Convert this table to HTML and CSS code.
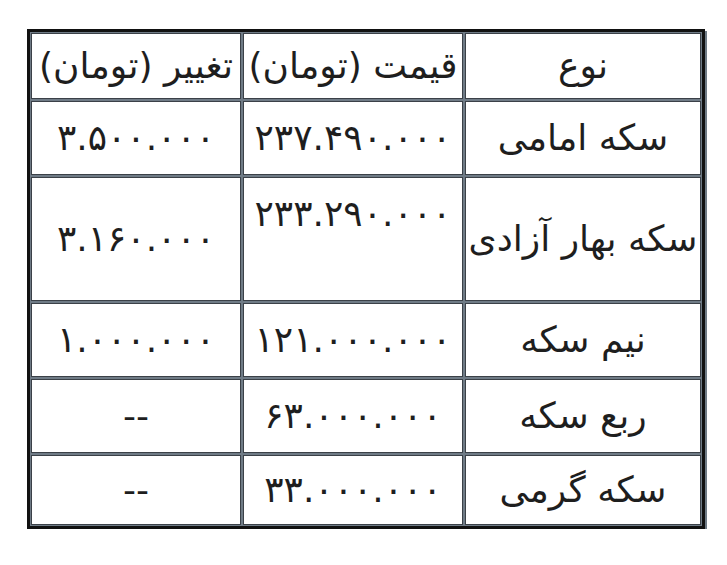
FILE: index.html
```html
<!DOCTYPE html>
<html lang="fa" dir="rtl">
<head>
<meta charset="utf-8">
<link rel="stylesheet" href="styles.css">
</head>
<body>
<div class="page">
<table class="prices">
  <tr class="r-head">
    <td class="c-name">نوع</td>
    <td class="c-price">قیمت (تومان)</td>
    <td class="c-change">تغییر (تومان)</td>
  </tr>
  <tr class="r1">
    <td class="c-name">سکه امامی</td>
    <td class="c-price num">۲۳۷.۴۹۰.۰۰۰</td>
    <td class="c-change num">۳.۵۰۰.۰۰۰</td>
  </tr>
  <tr class="r2">
    <td class="c-name">سکه بهار آزادی</td>
    <td class="c-price num">۲۳۳.۲۹۰.۰۰۰<br>&nbsp;</td>
    <td class="c-change num">۳.۱۶۰.۰۰۰</td>
  </tr>
  <tr class="r3">
    <td class="c-name">نیم سکه</td>
    <td class="c-price num">۱۲۱.۰۰۰.۰۰۰</td>
    <td class="c-change num">۱.۰۰۰.۰۰۰</td>
  </tr>
  <tr class="r4">
    <td class="c-name">ربع سکه</td>
    <td class="c-price num">۶۳.۰۰۰.۰۰۰</td>
    <td class="c-change">--</td>
  </tr>
  <tr class="r5">
    <td class="c-name">سکه گرمی</td>
    <td class="c-price num">۳۳.۰۰۰.۰۰۰</td>
    <td class="c-change">--</td>
  </tr>
</table>
</div>
</body>
</html>
```

FILE: styles.css
```css
html, body {
  margin: 0;
  padding: 0;
  background: #ffffff;
}

.page {
  padding: 29px 22px 0 22px;
  font-family: "DejaVu Sans", "Noto Sans", sans-serif;
  color: #1e1e1e;
}

.prices {
  width: 678px;
  border-collapse: separate;
  border-spacing: 0;
  border: 3px solid #111;
  box-shadow: 2px 2px 0 #6f7b86;
  font-size: 36px;
  line-height: 50px;
}

.prices td {
  border: 1px solid #6f7b86;
  box-shadow: inset 0 0 0 1px #3b4148;
  text-align: center;
  vertical-align: middle;
  padding: 12px 0;
  white-space: nowrap;
}

.prices td.num {
  letter-spacing: 2.5px;
}

.r-head td { padding: 8px 0; }
.r5 td { padding: 10px 0; }

.c-name { width: 236px; }
.c-price { width: 220px; }
.c-change { width: 210px; }
```
